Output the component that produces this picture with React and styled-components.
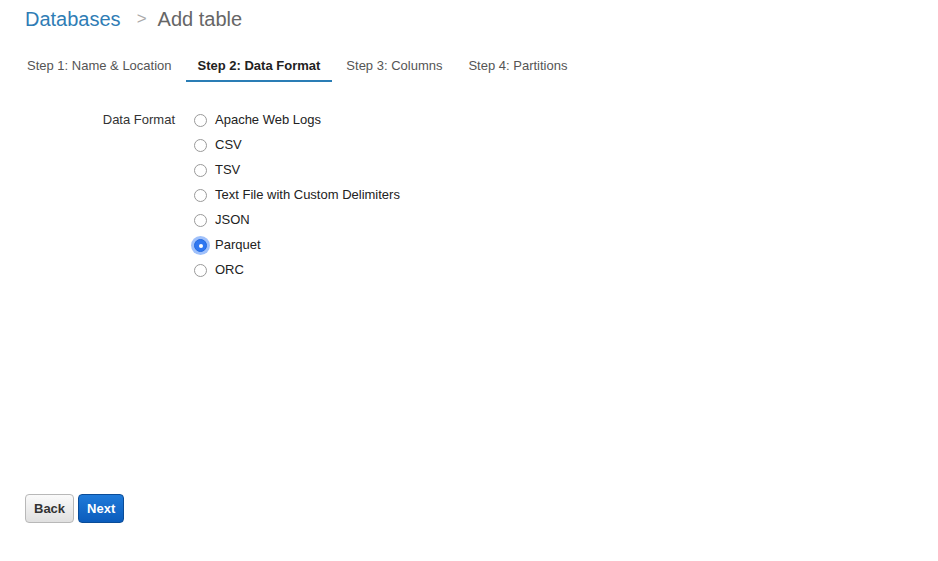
import React, { useState } from 'react';
import styled, { createGlobalStyle } from 'styled-components';

const GlobalStyle = createGlobalStyle`
  body {
    margin: 0;
    background: #fff;
    font-family: "Liberation Sans", Arial, sans-serif;
    color: #333;
  }
`;

const FORMATS = [
  'Apache Web Logs',
  'CSV',
  'TSV',
  'Text File with Custom Delimiters',
  'JSON',
  'Parquet',
  'ORC',
];

const STEPS = [
  'Step 1: Name & Location',
  'Step 2: Data Format',
  'Step 3: Columns',
  'Step 4: Partitions',
];

const Page = styled.div`
  display: flex;
  flex-direction: column;
  height: 561px;
  padding: 6px 15px 0 25px;
  box-sizing: border-box;
`;

const Breadcrumb = styled.h2`
  margin: 0;
  font-size: 20px;
  font-weight: normal;
  line-height: 26px;
  display: flex;
  align-items: center;
`;

const Crumb = styled.a`
  color: #2f7db5;
  text-decoration: none;
`;

const Divider = styled.span`
  color: #aaa;
  margin: 0 11px 0 16px;
  font-size: 17px;
`;

const Current = styled.span`
  color: #666;
`;

const Tabs = styled.ul`
  display: flex;
  list-style: none;
  margin: 20px 0 0 -10px;
  padding: 0;
  gap: 2px;
`;

const Tab = styled.li`
  padding: 0 12px;
  height: 30px;
  line-height: 28px;
  font-size: 13px;
  color: ${(p) => (p.$active ? '#222' : '#555')};
  font-weight: ${(p) => (p.$active ? 'bold' : 'normal')};
  border-bottom: 2px solid ${(p) => (p.$active ? '#2a7db5' : 'transparent')};
  box-sizing: border-box;
  cursor: pointer;
`;

const Form = styled.div`
  display: flex;
  margin-top: 28px;
`;

const Label = styled.div`
  width: 150px;
  text-align: right;
  font-size: 13px;
  color: #333;
  line-height: 16px;
  padding-top: 2px;
`;

const Options = styled.div`
  display: flex;
  flex-direction: column;
  gap: 9px;
  margin: 2px 0 0 19px;
`;

const Option = styled.label`
  display: flex;
  align-items: center;
  gap: 8px;
  font-size: 13px;
  line-height: 16px;
  color: #222;
  cursor: pointer;
`;

const Radio = styled.span`
  width: 13px;
  height: 13px;
  border-radius: 50%;
  box-sizing: border-box;
  margin-top: 1px;
  display: flex;
  align-items: center;
  justify-content: center;
  background: ${(p) => (p.$checked ? '#2f77f1' : '#fff')};
  border: 1px solid ${(p) => (p.$checked ? '#2269e0' : '#9a9a9a')};
  box-shadow: ${(p) => (p.$checked ? '0 0 0 3px rgba(80, 140, 245, 0.55)' : 'none')};
  &::after {
    content: '';
    width: 4px;
    height: 4px;
    border-radius: 50%;
    background: #fff;
    display: ${(p) => (p.$checked ? 'block' : 'none')};
  }
`;

const Footer = styled.div`
  display: flex;
  gap: 4px;
  margin-top: auto;
  margin-bottom: 38px;
`;

const Button = styled.button`
  font-family: "Liberation Sans", Arial, sans-serif;
  font-size: 13px;
  font-weight: bold;
  height: 29px;
  padding: 0 8px;
  border-radius: 4px;
  cursor: pointer;
  color: ${(p) => (p.$primary ? '#fff' : '#333')};
  background: ${(p) =>
    p.$primary
      ? 'linear-gradient(#1f7ad9, #0b5cbc)'
      : 'linear-gradient(#fafafa, #e0e0e0)'};
  border: 1px solid ${(p) => (p.$primary ? '#0a4c98' : '#b8b8b8')};
`;

export default function App() {
  const [format, setFormat] = useState('Parquet');
  return (
    <Page>
      <GlobalStyle />
      <Breadcrumb>
        <Crumb href="#">Databases</Crumb>
        <Divider>&gt;</Divider>
        <Current>Add table</Current>
      </Breadcrumb>
      <Tabs>
        {STEPS.map((s, i) => (
          <Tab key={s} $active={i === 1}>
            {s}
          </Tab>
        ))}
      </Tabs>
      <Form>
        <Label>Data Format</Label>
        <Options>
          {FORMATS.map((f) => (
            <Option key={f} onClick={() => setFormat(f)}>
              <Radio $checked={format === f} />
              {f}
            </Option>
          ))}
        </Options>
      </Form>
      <Footer>
        <Button>Back</Button>
        <Button $primary>Next</Button>
      </Footer>
    </Page>
  );
}
